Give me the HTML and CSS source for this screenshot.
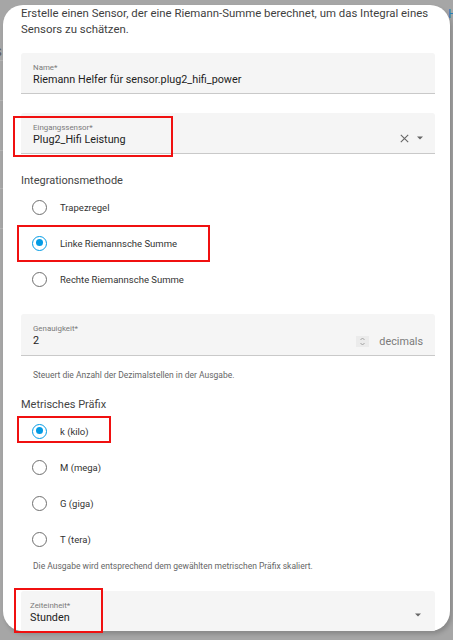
FILE: index.html
```html
<!DOCTYPE html>
<html lang="de">
<head>
<meta charset="utf-8">
<link rel="stylesheet" href="styles.css">
</head>
<body>
<div class="backdrop">
  <span class="bg-s">S</span>
  <span class="bg-h">H</span>
</div>
<div class="dialog">
  <p class="desc">Erstelle einen Sensor, der eine Riemann-Summe berechnet, um das Integral eines Sensors zu schätzen.</p>

  <div class="field f-name">
    <div class="text">
      <div class="label">Name*</div>
      <div class="value">Riemann Helfer für sensor.plug2_hifi_power</div>
    </div>
  </div>

  <div class="field f-sensor">
    <div class="text">
      <div class="label">Eingangssensor*</div>
      <div class="value">Plug2_Hifi Leistung</div>
    </div>
    <svg class="ic-x" width="9" height="9" viewBox="0 0 9 9"><path d="M0.8 0.8 L8.2 8.2 M8.2 0.8 L0.8 8.2" stroke="#666" stroke-width="1.1" fill="none"/></svg>
    <svg class="ic-drop" width="6" height="4" viewBox="0 0 6 4"><path d="M0 0.5 H6 L3 3.5 Z" fill="#666"/></svg>
  </div>

  <div class="heading h-int">Integrationsmethode</div>
  <div class="radios">
    <div class="radio-row"><span class="radio"></span><span class="rlabel">Trapezregel</span></div>
    <div class="radio-row"><span class="radio checked"></span><span class="rlabel">Linke Riemannsche Summe</span></div>
    <div class="radio-row"><span class="radio"></span><span class="rlabel">Rechte Riemannsche Summe</span></div>
  </div>

  <div class="field f-prec">
    <div class="text">
      <div class="label">Genauigkeit*</div>
      <div class="value">2</div>
    </div>
    <span class="spinner">
      <svg width="13" height="11" viewBox="0 0 13 11"><path d="M4.5 4 L6.5 2 L8.5 4 M4.5 7 L6.5 9 L8.5 7" stroke="#999" stroke-width="0.9" fill="none"/></svg>
    </span>
    <span class="suffix">decimals</span>
  </div>
  <div class="helper h1">Steuert die Anzahl der Dezimalstellen in der Ausgabe.</div>

  <div class="heading h-pre">Metrisches Präfix</div>
  <div class="radios">
    <div class="radio-row"><span class="radio checked"></span><span class="rlabel">k (kilo)</span></div>
    <div class="radio-row"><span class="radio"></span><span class="rlabel">M (mega)</span></div>
    <div class="radio-row"><span class="radio"></span><span class="rlabel">G (giga)</span></div>
    <div class="radio-row"><span class="radio"></span><span class="rlabel">T (tera)</span></div>
  </div>
  <div class="helper h2">Die Ausgabe wird entsprechend dem gewählten metrischen Präfix skaliert.</div>

  <div class="field f-time">
    <div class="text">
      <div class="label">Zeiteinheit*</div>
      <div class="value">Stunden</div>
    </div>
    <svg class="ic-drop" width="6" height="4" viewBox="0 0 6 4"><path d="M0 0.5 H6 L3 3.5 Z" fill="#666"/></svg>
  </div>
</div>

<div class="mark m1"></div>
<div class="mark m2"></div>
<div class="mark m3"></div>
<div class="mark m4"></div>
</body>
</html>
```

FILE: styles.css
```css
html, body {
  margin: 0;
  padding: 0;
}
body {
  width: 453px;
  height: 640px;
  overflow: hidden;
  background: #a6a6a6;
  font-family: Roboto, "Liberation Sans", sans-serif;
  position: relative;
}
.backdrop {
  position: absolute;
  inset: 0;
  background:
    linear-gradient(#b4b4b4, #b4b4b4) 0 60px / 3px 1px no-repeat,
    linear-gradient(#b4b4b4, #b4b4b4) 0 100px / 3px 1px no-repeat,
    linear-gradient(#b4b4b4, #b4b4b4) 0 150px / 3px 1px no-repeat,
    linear-gradient(#b4b4b4, #b4b4b4) 0 188px / 3px 1px no-repeat,
    linear-gradient(#b4b4b4, #b4b4b4) 0 228px / 3px 1px no-repeat,
    #a6a6a6;
}
.bg-s {
  position: absolute;
  left: -5px;
  top: 46px;
  font-size: 11px;
  color: #555;
}
.bg-h {
  position: absolute;
  left: 448px;
  top: 6px;
  font-size: 13px;
  color: #2a7fb8;
}
.dialog {
  position: relative;
  margin: 5px 0 0 3px;
  width: 447px;
  height: 626px;
  box-sizing: border-box;
  padding: 0 15px 0 18px;
  background: #fff;
  border-radius: 20px;
  overflow: hidden;
  box-shadow: 2px 3px 4px rgba(0,0,0,0.18);
}
.desc {
  margin: 0;
  font-size: 11.4px;
  line-height: 16px;
  color: #3f3f3f;
}
.field {
  display: flex;
  align-items: flex-start;
  box-sizing: border-box;
  height: 41px;
  padding: 10px 12px 0;
  background: #f5f5f5;
  border-radius: 3px 3px 0 0;
  border-bottom: 1px solid #c9c9c9;
}
.field .text {
  flex: 1;
}
.label {
  font-size: 7.9px;
  line-height: 10px;
  color: #7a7a7a;
}
.value {
  font-size: 10.8px;
  line-height: 14px;
  color: #222;
}
.f-name { margin-top: 16px; }
.f-sensor { margin-top: 19px; }
.f-prec { margin-top: 17px; height: 42px; }
.f-time { margin-top: 19px; padding-left: 9px; }
.ic-x {
  margin-top: 11px;
  margin-right: 8px;
}
.f-sensor .ic-drop {
  margin-top: 13px;
  margin-right: 0;
}
.f-time .ic-drop {
  margin-top: 12px;
  margin-right: 2px;
}
.spinner {
  display: block;
  width: 13px;
  height: 11px;
  margin-top: 12px;
  background: #ebebeb;
}
.spinner svg { display: block; }
.suffix {
  margin-top: 10px;
  margin-left: 10px;
  font-size: 10.8px;
  line-height: 15px;
  color: #7a7a7a;
}
.heading {
  font-size: 11px;
  line-height: 16px;
  color: #444;
}
.h-int { margin-top: 19px; }
.h-pre { margin-top: 16px; }
.radio-row {
  display: flex;
  align-items: center;
  height: 36px;
  padding-left: 11px;
}
.radio {
  box-sizing: border-box;
  width: 15px;
  height: 15px;
  border: 1.5px solid #6f6f6f;
  border-radius: 50%;
  margin-right: 13px;
  position: relative;
}
.radio.checked {
  border-color: #039be5;
}
.radio.checked::after {
  content: "";
  position: absolute;
  left: 2.5px;
  top: 2.5px;
  width: 7px;
  height: 7px;
  border-radius: 50%;
  background: #039be5;
}
.rlabel {
  font-size: 9.5px;
  color: #333;
}
.helper {
  padding-left: 12px;
  font-size: 8.5px;
  line-height: 12px;
  color: #666;
}
.h1 { margin-top: 13px; }
.h2 { margin-top: 3px; }
.mark {
  position: absolute;
  border: 2px solid #f01010;
  box-sizing: border-box;
}
.m1 { left: 13px; top: 116px; width: 160px; height: 41px; }
.m2 { left: 17px; top: 225px; width: 193px; height: 37px; }
.m3 { left: 17px; top: 416px; width: 94px; height: 27px; }
.m4 { left: 14px; top: 588px; width: 89px; height: 45px; }
```
